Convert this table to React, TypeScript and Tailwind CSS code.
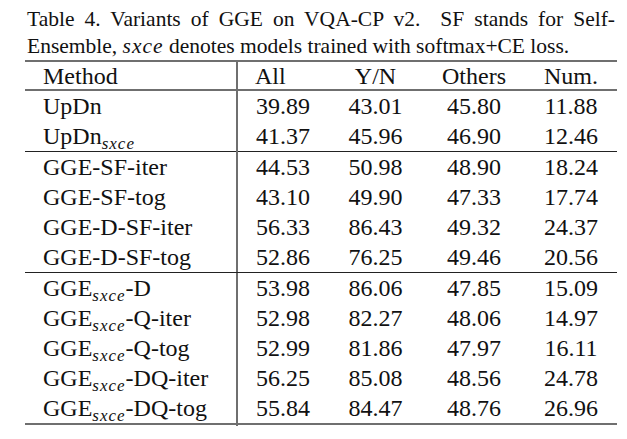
type Row = { name: string; sub?: string; tail?: string; vals: string[] };

const groups: Row[][] = [
    [
        { name: "UpDn", vals: ["39.89", "43.01", "45.80", "11.88"] },
        { name: "UpDn", sub: "sxce", vals: ["41.37", "45.96", "46.90", "12.46"] },
    ],
    [
        { name: "GGE-SF-iter", vals: ["44.53", "50.98", "48.90", "18.24"] },
        { name: "GGE-SF-tog", vals: ["43.10", "49.90", "47.33", "17.74"] },
        { name: "GGE-D-SF-iter", vals: ["56.33", "86.43", "49.32", "24.37"] },
        { name: "GGE-D-SF-tog", vals: ["52.86", "76.25", "49.46", "20.56"] },
    ],
    [
        { name: "GGE", sub: "sxce", tail: "-D", vals: ["53.98", "86.06", "47.85", "15.09"] },
        { name: "GGE", sub: "sxce", tail: "-Q-iter", vals: ["52.98", "82.27", "48.06", "14.97"] },
        { name: "GGE", sub: "sxce", tail: "-Q-tog", vals: ["52.99", "81.86", "47.97", "16.11"] },
        { name: "GGE", sub: "sxce", tail: "-DQ-iter", vals: ["56.25", "85.08", "48.56", "24.78"] },
        { name: "GGE", sub: "sxce", tail: "-DQ-tog", vals: ["55.84", "84.47", "48.76", "26.96"] },
    ],
];

const cols = "grid grid-cols-[213px_90px_95px_102px_92px]";

function TableRow({ row }: { row: Row }) {
    return (
        <div className={`${cols} h-[30px] leading-[30px]`}>
            <div className="pl-[18px] border-r-2 border-[#6f6f6f] whitespace-nowrap">
                {row.name}
                {row.sub && <span className="italic text-[17px] relative top-[5px] tracking-[1px]">{row.sub}</span>}
                {row.tail}
            </div>
            {row.vals.map((v, i) => (
                <div key={i} className="text-center">{v}</div>
            ))}
        </div>
    );
}

export default function App() {
    return (
        <div className="w-[627px] h-[439px] bg-white text-[#111] font-['Liberation_Serif'] overflow-hidden">
            <p className="ml-[27px] w-[588px] pt-[6px] text-[21.5px] leading-[27px] text-justify">
                Table 4. Variants of GGE on VQA-CP v2.&nbsp; SF stands for Self-Ensemble,{" "}
                <span className="italic tracking-[1px]">sxce</span> denotes models trained with softmax+CE loss.
            </p>
            <div className="ml-[25px] w-[592px] text-[24px] border-t-2 border-b-2 border-[#6f6f6f]">
                <div className={`${cols} h-[29px] leading-[29px] border-b-2 border-[#6f6f6f]`}>
                    <div className="pl-[18px] border-r-2 border-[#6f6f6f]">Method</div>
                    <div className="pl-[17px]">All</div>
                    <div className="text-center">Y/N</div>
                    <div className="text-center">Others</div>
                    <div className="text-center">Num.</div>
                </div>
                {groups.map((g, gi) => (
                    <div key={gi} className={gi > 0 ? "border-t-[1.5px] border-[#222]" : ""}>
                        {g.map((r, ri) => (
                            <TableRow key={ri} row={r} />
                        ))}
                    </div>
                ))}
            </div>
        </div>
    );
}
